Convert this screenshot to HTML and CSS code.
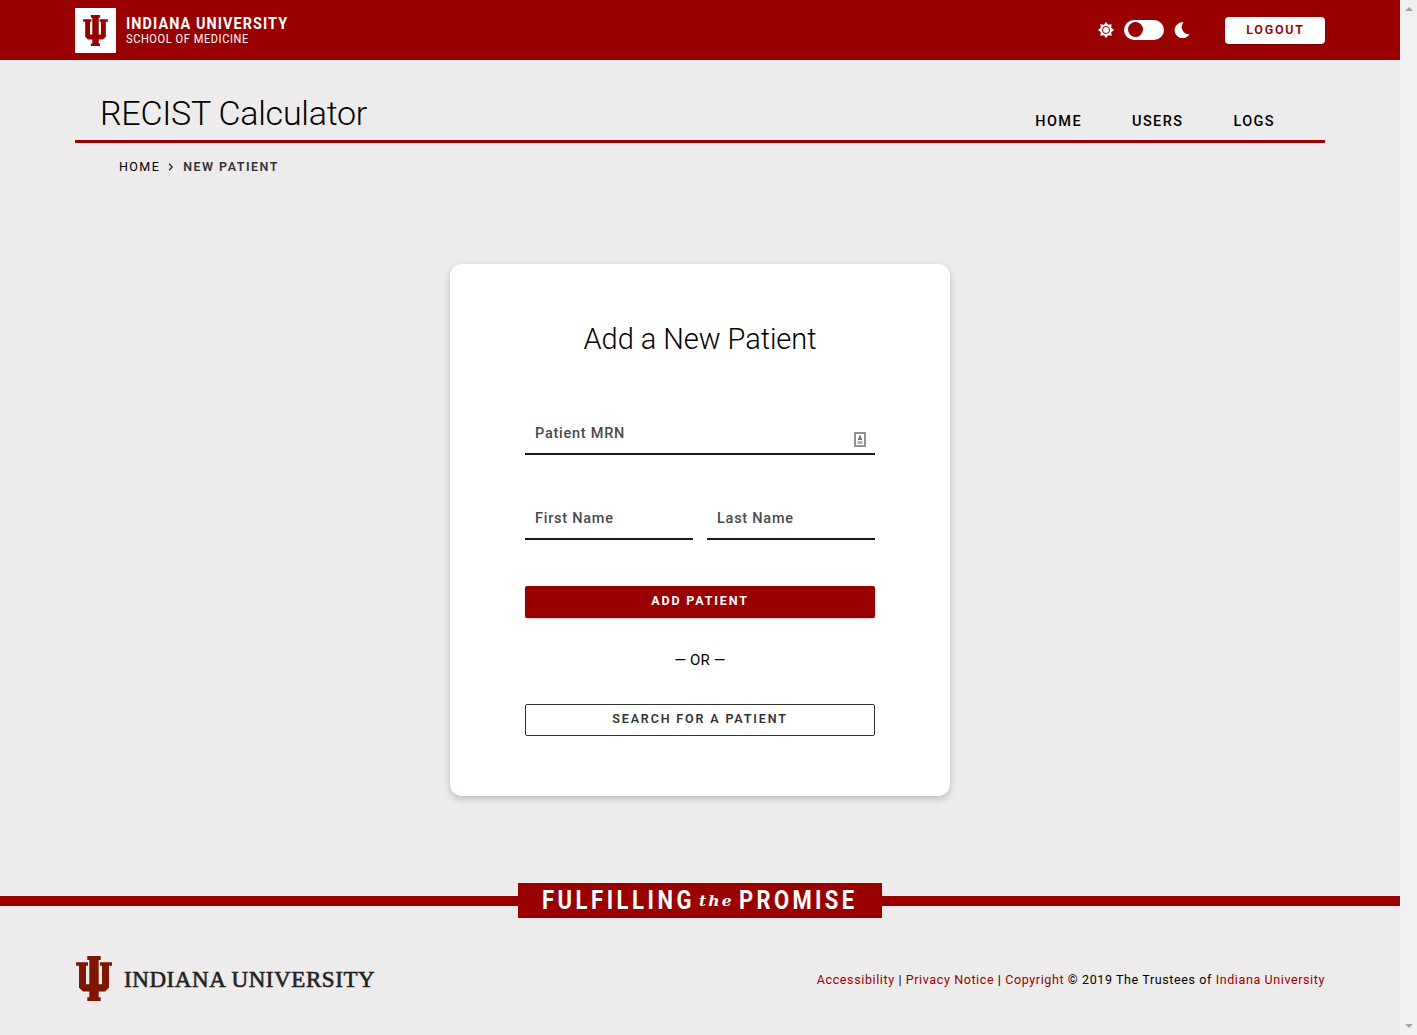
FILE: index.html
```html
<!DOCTYPE html>
<html lang="en">
<head>
<meta charset="utf-8">
<title>RECIST Calculator</title>
<link rel="stylesheet" href="styles.css">
</head>
<body>
<svg class="sprite" aria-hidden="true">
  <symbol id="trident" viewBox="0 0 36 45">
    <path d="M11.300 0H24.700V4H22.700V28.300H26V9.700H24V6.200H36V9.700H33V31.700L29 35.500H22.700V41.200H24.700V45H11.300V41.200H13.300V35.500H7L3 31.700V9.700H0V6.200H12V9.700H10V28.300H13.300V4H11.300Z"/>
  </symbol>
</svg>
<div class="layout">
<div class="page">
  <header class="brand-bar">
    <div class="wrap brand-row">
      <a class="brand">
        <span class="brand-tab"><svg class="brand-mark"><use href="#trident"/></svg></span>
        <span class="brand-text"><span class="brand-name">INDIANA UNIVERSITY</span><span class="brand-school">SCHOOL OF MEDICINE</span></span>
      </a>
      <div class="tools">
        <svg class="sun" viewBox="0 0 16 16"><path d="M16 8L13.200 10.150L13.660 13.660L10.150 13.200L8 16L5.850 13.200L2.340 13.660L2.800 10.150L0 8L2.800 5.850L2.340 2.340L5.850 2.800L8 0L10.150 2.800L13.660 2.340L13.200 5.850Z" fill="#fff"/><circle cx="8" cy="8" r="3.500" fill="#fff" stroke="#900" stroke-width="1"/></svg>
        <span class="toggle"><span class="knob"></span></span>
        <svg class="moon" viewBox="0 0 16 16"><path d="M9.500 0.300A8 8 0 1 0 15.600 12.200A7.200 7.200 0 0 1 9.500 0.300Z" fill="#fff"/></svg>
        <button class="logout">LOGOUT</button>
      </div>
    </div>
  </header>
  <div class="wrap masthead">
    <h1 class="site-title">RECIST Calculator</h1>
    <nav class="nav"><a>HOME</a><a>USERS</a><a>LOGS</a></nav>
  </div>
  <div class="wrap crumbs"><span class="crumb-home">HOME</span><svg class="chevron" viewBox="0 0 6 8"><path d="M1 .8L4.300 4L1 7.200" fill="none" stroke="#222" stroke-width="1.200"/></svg><span class="crumb-here">NEW PATIENT</span></div>
  <main class="main">
    <form class="card">
      <h2 class="card-title">Add a New Patient</h2>
      <div class="field field-mrn"><label>Patient MRN</label>
        <svg class="autofill" viewBox="0 0 12 15"><rect x="1" y="1" width="10" height="13" fill="#fff" stroke="#929292" stroke-width="2"/><path d="M5 3.500H7V5.500L8 6.500V8H4V6.500L5 5.500Z" fill="#777"/><path d="M3.500 9H8.500V12H3.500Z" fill="#b0b0b0"/></svg>
      </div>
      <div class="name-row">
        <div class="field"><label>First Name</label></div>
        <div class="field"><label>Last Name</label></div>
      </div>
      <button type="button" class="btn btn-add"><span>ADD PATIENT</span></button>
      <div class="or"><span>— OR —</span></div>
      <button type="button" class="btn btn-search"><span>SEARCH FOR A PATIENT</span></button>
    </form>
  </main>
  <div class="promise">
    <div class="promise-tab"><span class="fulfilling">FULFILLING</span><em class="the">the</em><span class="word-promise">PROMISE</span></div>
  </div>
  <footer class="wrap footer">
    <a class="foot-brand"><svg class="foot-mark"><use href="#trident"/></svg><span class="foot-name">INDIANA UNIVERSITY</span></a>
    <p class="legal"><a>Accessibility</a> | <a>Privacy Notice</a> | <a>Copyright</a> © 2019 The Trustees of <a>Indiana University</a></p>
  </footer>
</div>
<div class="scrollbar"><span class="up"></span><span class="down"></span></div>
</div>
</body>
</html>
```
FILE: styles.css
```css
* { box-sizing: border-box; }
body { margin: 0; font-family: Roboto, "Liberation Sans", sans-serif; color: #000; background: #edebeb; }
button { font-family: inherit; padding: 0; border: 0; }
h1, h2, p { margin: 0; font-weight: 300; }
span, a, label, em, h1, h2, p { white-space: nowrap; }
.sprite { display: none; }
.layout { display: flex; height: 1035px; overflow: hidden; }
.page { width: 1400px; display: flex; flex-direction: column; }
.scrollbar { width: 17px; background: #f0f0f0; display: flex; flex-direction: column; justify-content: space-between; align-items: center; padding: 7px 0; }
.up, .down { border: 4px solid transparent; border-top: 0; border-bottom-color: #a3a3a3; }
.down { border-top: 4px solid #a3a3a3; border-bottom: 0; }
.wrap { width: 1250px; margin: 0 auto; }

.brand-bar { height: 60px; background: #900; color: #fff; }
.brand-row { display: flex; justify-content: space-between; padding-top: 8px; }
.brand { display: flex; gap: 10px; }
.brand-tab { width: 41px; height: 45px; background: #fff; display: flex; justify-content: center; padding-top: 7px; }
.brand-mark { width: 25px; height: 31px; fill: #900; }
.brand-text { display: flex; flex-direction: column; padding-top: 7px; }
.brand-name { font-size: 16px; line-height: 18px; font-weight: 700; letter-spacing: 1.2px; transform: scaleX(.9); transform-origin: left; }
.brand-school { font-size: 12px; line-height: 12px; font-weight: 400; letter-spacing: .63px; transform: scaleX(.92); transform-origin: left; }
.tools { display: flex; align-items: center; height: 44px; }
.sun { width: 16px; height: 16px; margin-right: 10px; }
.toggle { width: 40px; height: 20px; border-radius: 10px; background: #fff; padding: 2px 4px; margin-right: 10px; }
.knob { display: block; width: 15px; height: 15px; border-radius: 50%; background: #900; }
.moon { width: 16px; height: 16px; margin-right: 35px; }
.logout { width: 100px; height: 27px; border-radius: 4px; background: #fff; color: #900; font-size: 12.5px; font-weight: 600; letter-spacing: 1.75px; padding: 0 0 1px 1px; box-shadow: 0 1px 2px rgba(0,0,0,.25); }

.masthead { height: 83px; border-bottom: 3px solid #900; display: flex; justify-content: space-between; padding: 33px 50px 0 25px; }
.site-title { font-size: 34px; line-height: 40px; letter-spacing: -.25px; }
.nav { display: flex; gap: 50px; font-size: 14.5px; font-weight: 500; line-height: 20px; letter-spacing: 1.4px; padding-top: 19px; }
.crumbs { display: flex; align-items: center; height: 47px; padding-left: 44px; font-size: 12.5px; letter-spacing: 1.4px; color: #222; }
.crumb-home { color: #000; }
.chevron { width: 6px; height: 8px; margin: 0 9px 0 8px; }
.crumb-here { font-weight: 600; color: #333; letter-spacing: 1.5px; }

.main { height: 693px; padding-top: 74px; display: flex; justify-content: center; align-items: flex-start; }
.card { width: 500px; height: 532px; background: #fff; border-radius: 12px; box-shadow: 0 3px 7px rgba(0,0,0,.2); padding: 55px 75px 0; display: flex; flex-direction: column; }
.card-title { font-size: 29px; line-height: 40px; letter-spacing: -.06px; text-align: center; margin-bottom: 56px; }
.field { height: 40px; border-bottom: 2px solid #191919; padding: 9px 9px 0 10px; display: flex; justify-content: space-between; flex: 1; color: #4a4a4a; font-size: 14.5px; line-height: 20px; font-weight: 500; letter-spacing: .75px; }
.field-mrn { flex: none; margin-bottom: 45px; }
.autofill { width: 12px; height: 15px; margin-top: 8px; }
.name-row { display: flex; gap: 14px; height: 40px; margin-bottom: 46px; }
.btn { height: 32px; border-radius: 2px; font-size: 12.5px; letter-spacing: 1.85px; font-weight: 700; padding-bottom: 4px; flex: none; }
.btn-add { background: #900; color: #fff; box-shadow: 0 1px 2px rgba(0,0,0,.2); }
.or { height: 86px; display: flex; align-items: center; justify-content: center; font-size: 15px; font-weight: 400; letter-spacing: .1px; padding-bottom: 2px; }
.btn-search { background: #fff; color: #333; border: 1px solid #333; font-weight: 600; }

.promise { height: 35px; display: flex; justify-content: center; background: linear-gradient(#900, #900) 0 13px / 100% 10px no-repeat; }
.promise-tab { width: 364px; background: #900; color: #fff; display: flex; align-items: center; padding-left: 24px; font-weight: 700; font-size: 25px; }
.fulfilling, .word-promise { transform: scaleX(.88); transform-origin: left; }
.fulfilling { width: 156px; letter-spacing: 4px; }
.the { width: 40.5px; font: italic 700 15.5px "DejaVu Serif", serif; letter-spacing: 2.2px; padding-left: 1px; }
.word-promise { width: 120px; letter-spacing: 3.8px; }
.footer { height: 117px; display: flex; justify-content: space-between; padding-top: 38px; }
.foot-brand { display: flex; }
.foot-mark { width: 36px; height: 45px; margin: 0 12px 0 1px; fill: #7d1704; }
.foot-name { font: 400 23px/48px "Liberation Serif", serif; letter-spacing: .58px; color: #222; -webkit-text-stroke: .6px #222; }
.legal { font-size: 12.5px; font-weight: 400; line-height: 48px; letter-spacing: .61px; }
.legal a { color: #900; }
```
